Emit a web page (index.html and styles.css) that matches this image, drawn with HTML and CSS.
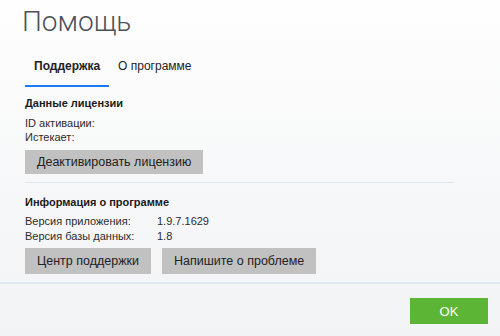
FILE: index.html
```html
<!DOCTYPE html>
<html lang="ru">
<head>
<meta charset="utf-8">
<link rel="stylesheet" href="styles.css">
</head>
<body>
<div class="window">
  <h1 class="title">Помощь</h1>
  <div class="tabs">
    <div class="tab active">Поддержка</div>
    <div class="tab">О программе</div>
  </div>
  <div class="content">
    <section class="section">
      <h2 class="section-title">Данные лицензии</h2>
      <div class="info">
        <div>ID активации:</div>
        <div>Истекает:</div>
      </div>
      <div class="buttons"><button class="btn">Деактивировать лицензию</button></div>
    </section>
    <hr class="sep">
    <section class="section">
      <h2 class="section-title">Информация о программе</h2>
      <div class="info grid">
        <div>Версия приложения:</div><div>1.9.7.1629</div>
        <div>Версия базы данных:</div><div>1.8</div>
      </div>
      <div class="buttons tight">
        <button class="btn tall">Центр поддержки</button>
        <button class="btn tall">Напишите о проблеме</button>
      </div>
    </section>
  </div>
  <div class="footer">
    <button class="ok">OK</button>
  </div>
</div>
</body>
</html>
```
FILE: styles.css
```css
html, body { margin: 0; padding: 0; }
body {
  width: 500px;
  height: 336px;
  overflow: hidden;
  font-family: "Liberation Sans", Arial, sans-serif;
  color: #1e1e1e;
  background: linear-gradient(#fefefe, #f2f3f5);
}
.window { display: flex; flex-direction: column; height: 336px; }
.title {
  margin: 0;
  padding: 4px 0 0 22px;
  font-family: Roboto, "Liberation Sans", sans-serif;
  font-size: 28px;
  font-weight: 300;
  line-height: 36px;
  color: #4c5157;
}
.tabs { display: flex; padding: 18px 0 0 25px; }
.tab {
  padding: 0 9px 11px;
  font-size: 12px;
  line-height: 16px;
  color: #222;
  border-bottom: 2px solid transparent;
}
.tab.active { font-weight: 700; border-bottom-color: #1a7cf5; }
.content { padding: 9px 46px 0 25px; }
.section-title { margin: 0; font-size: 11px; font-weight: 700; line-height: 15px; color: #1a1a1a; }
.info { margin-top: 5px; font-size: 11px; line-height: 14px; color: #2c2c2c; }
.info.grid { margin-top: 4px; line-height: 15px; display: grid; grid-template-columns: 132px auto; }
.buttons { display: flex; gap: 11px; margin-top: 6px; }
.buttons.tight { margin-top: 4px; }
.btn {
  font-family: inherit;
  font-size: 12.5px;
  color: #222;
  background: #c1c1c1;
  border: none;
  height: 24px;
  padding: 0 12px;
}
.btn.tall { height: 26px; }
.sep { border: none; height: 1px; background: #e1e7ef; margin: 8px 0 12px 0; }
.footer {
  margin-top: 8px;
  border-top: 2px solid #e2e9f0;
  display: flex;
  justify-content: flex-end;
  padding: 14px 12px 0 0;
}
.ok {
  width: 78px;
  height: 26px;
  background: #5db535;
  color: #fff;
  border: none;
  font-family: inherit;
  font-size: 13px;
}
```
